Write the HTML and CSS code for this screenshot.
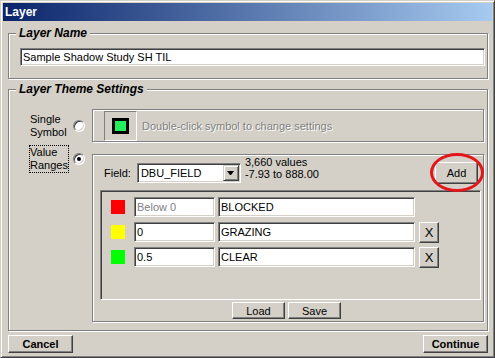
FILE: index.html
```html
<!DOCTYPE html>
<html>
<head>
  <title>Layer</title>
  <link rel="stylesheet" href="styles.css">
</head>
<body>
  <div class="window">
    <div class="titlebar">Layer</div>

    <div class="client">
      <fieldset class="group group-name">
        <legend>Layer Name</legend>
        <input type="text" class="field name-input" value="Sample Shadow Study SH TIL">
      </fieldset>

      <fieldset class="group group-theme">
        <legend>Layer Theme Settings</legend>

        <!-- single symbol option -->
        <div class="option option-single">
          <div class="option-label">Single<br>Symbol</div>
          <span class="radio"></span>
          <div class="panel single-panel">
            <button class="symbol-btn"><span class="symbol"></span></button>
            <span class="disabled-text">Double-click symbol to change settings</span>
          </div>
        </div>

        <!-- value ranges option -->
        <div class="option option-ranges">
          <div class="option-label focused">Value<br>Ranges</div>
          <span class="radio checked"></span>
          <div class="panel ranges-panel">
            <div class="ranges-top">
              <span class="field-label">Field:</span>
              <div class="combo">
                <span class="combo-text">DBU_FIELD</span>
                <span class="combo-btn">
                  <svg width="7" height="4" viewBox="0 0 7 4"><path d="M0 0h7L4 4H3z" fill="#000"/></svg>
                </span>
              </div>
              <div class="stats">3,660 values<br>-7.93 to 888.00</div>
              <div class="add-wrap">
                <button class="btn add-btn">Add</button>
                <span class="callout"></span>
              </div>
            </div>

            <div class="range-list">
              <div class="range-row">
                <span class="swatch red"></span>
                <input type="text" class="field low-input muted" value="Below 0">
                <input type="text" class="field label-input" value="BLOCKED">
              </div>
              <div class="range-row">
                <span class="swatch yellow"></span>
                <input type="text" class="field low-input" value="0">
                <input type="text" class="field label-input" value="GRAZING">
                <button class="btn remove-btn">X</button>
              </div>
              <div class="range-row">
                <span class="swatch green"></span>
                <input type="text" class="field low-input" value="0.5">
                <input type="text" class="field label-input" value="CLEAR">
                <button class="btn remove-btn">X</button>
              </div>
            </div>

            <div class="list-actions">
              <button class="btn action-btn">Load</button>
              <button class="btn action-btn">Save</button>
            </div>
          </div>
        </div>
      </fieldset>

      <div class="footer">
        <button class="btn footer-btn">Cancel</button>
        <button class="btn footer-btn">Continue</button>
      </div>
    </div>
  </div>
</body>
</html>
```

FILE: styles.css
```css
body {
  margin: 0;
  background-color: #d4d0c8;
  font-family: "Liberation Sans", Arial, sans-serif;
  font-size: 11px;
  color: #000;
}
.window {
  width: 495px;
  height: 358px;
  box-sizing: border-box;
  border: 1px solid;
  border-color: #d4d0c8 #404040 #404040 #d4d0c8;
  box-shadow: inset 1px 1px #fff, inset -1px -1px #808080;
  padding: 2px;
  display: flex;
  flex-direction: column;
}
.titlebar {
  height: 18px;
  line-height: 18px;
  padding-left: 2px;
  background: linear-gradient(to right, #0a246a, #a6caf0);
  color: #fff;
  font-weight: bold;
  font-size: 12px;
}
.client {
  display: flex;
  flex-direction: column;
  padding: 0 4px 0 5px;
}

/* group boxes */
.group {
  margin: 0;
  min-width: 0;
  border: 1px solid #808080;
  box-shadow: inset 1px 1px #fff, 1px 1px #fff;
}
.group legend {
  padding: 0 3px;
  background-color: #d4d0c8;
  font-weight: bold;
  font-style: italic;
  font-size: 12px;
  line-height: 13px;
}
.group-name {
  margin-top: 6px;
  padding: 8px 2px 12px 7px;
}
.group-theme {
  margin-top: 4px;
  padding: 13px 3px 8px 7px;
}

/* sunken text fields */
.field {
  box-sizing: border-box;
  margin: 0;
  height: 20px;
  padding: 0 2px;
  border: 1px solid;
  border-color: #808080 #fff #fff #808080;
  box-shadow: inset 1px 1px #404040, inset -1px -1px #d4d0c8;
  background-color: #fff;
  font-family: inherit;
  font-size: 11px;
  color: #000;
  outline: none;
}
.name-input {
  height: 18px;
  width: 465px;
  margin-left: 4px;
}
.muted {
  color: #808080;
}

/* raised buttons */
.btn {
  box-sizing: border-box;
  margin: 0;
  padding: 0;
  border: 1px solid;
  border-color: #fff #404040 #404040 #fff;
  box-shadow: inset -1px -1px #808080, inset 1px 1px #d4d0c8;
  background-color: #d4d0c8;
  font-family: inherit;
  font-size: 11px;
  color: #000;
}

/* option rows */
.option {
  display: flex;
  padding-left: 13px;
}
.option-single {
  align-items: center;
}
.option-ranges {
  align-items: flex-start;
  margin-top: 3px;
}
.option-label {
  width: 38px;
  border: 1px solid transparent;
  line-height: 13px;
}
.option-label.focused {
  border: 1px dotted #000;
}
.radio {
  position: relative;
  flex: none;
  box-sizing: border-box;
  width: 12px;
  height: 12px;
  margin-left: 4px;
  border-radius: 50%;
  border: 1px solid;
  border-color: #808080 #fff #fff #808080;
  box-shadow: inset 1px 1px #404040, inset -1px -1px #d4d0c8;
  background-color: #fff;
}
.option-ranges .radio {
  margin-top: 8px;
}
.radio.checked::after {
  content: "";
  position: absolute;
  left: 3px;
  top: 3px;
  width: 4px;
  height: 4px;
  border-radius: 50%;
  background-color: #000;
}

/* etched panels */
.panel {
  flex: 1;
  box-sizing: border-box;
  margin-left: 7px;
  border: 1px solid #808080;
  box-shadow: inset 1px 1px #fff, 1px 1px #fff;
}
.single-panel {
  height: 33px;
  display: flex;
  align-items: center;
}
.symbol-btn {
  box-sizing: border-box;
  width: 33px;
  height: 30px;
  margin: 0 0 0 11px;
  padding: 0;
  border: 1px solid;
  border-color: #808080 #fff #fff #808080;
  background-color: #d4d0c8;
  display: flex;
  align-items: center;
  justify-content: center;
}
.symbol {
  width: 11px;
  height: 10px;
  border: 3px solid #000;
  background-color: #22ee5e;
}
.disabled-text {
  margin-left: 5px;
  color: #808080;
  text-shadow: 1px 1px #fff;
}

.ranges-panel {
  height: 168px;
  margin-top: 9px;
  padding: 0 2px 2px 7px;
  display: flex;
  flex-direction: column;
}
.ranges-top {
  height: 35px;
  display: flex;
  align-items: center;
}
.field-label {
  margin-left: 4px;
}
.combo {
  box-sizing: border-box;
  width: 104px;
  height: 20px;
  margin-left: 6px;
  padding: 1px;
  border: 1px solid;
  border-color: #808080 #fff #fff #808080;
  box-shadow: inset 1px 1px #404040, inset -1px -1px #d4d0c8;
  background-color: #fff;
  display: flex;
  align-items: center;
}
.combo-text {
  padding-left: 2px;
}
.combo-btn {
  box-sizing: border-box;
  width: 16px;
  height: 16px;
  margin-left: auto;
  border: 1px solid;
  border-color: #d4d0c8 #404040 #404040 #d4d0c8;
  box-shadow: inset 1px 1px #fff, inset -1px -1px #808080;
  background-color: #d4d0c8;
  display: flex;
  align-items: center;
  justify-content: center;
}
.stats {
  align-self: flex-start;
  margin: 1px 0 0 4px;
  line-height: 12px;
}
.add-wrap {
  position: relative;
  margin-left: auto;
  margin-right: 3px;
}
.add-btn {
  display: block;
  width: 43px;
  height: 22px;
}
.callout {
  position: absolute;
  left: -5px;
  top: -9px;
  right: -6px;
  bottom: -8px;
  border: 3px solid #e2161b;
  border-radius: 50%;
}

/* list of ranges */
.range-list {
  height: 110px;
  box-sizing: border-box;
  padding: 6px 0 0 10px;
  border: 1px solid;
  border-color: #808080 #fff #fff #808080;
  box-shadow: inset 1px 1px #404040, inset -1px -1px #d4d0c8;
  display: flex;
  flex-direction: column;
  gap: 5px;
}
.range-row {
  display: flex;
  align-items: center;
  height: 20px;
}
.swatch {
  width: 14px;
  height: 14px;
  margin-right: 9px;
}
.red { background-color: #f00; }
.yellow { background-color: #ff0; }
.green { background-color: #0f0; }
.low-input {
  width: 81px;
}
.label-input {
  width: 197px;
  margin-left: 3px;
}
.remove-btn {
  width: 20px;
  height: 21px;
  margin-left: 4px;
  font-size: 13px;
}
.list-actions {
  display: flex;
  justify-content: center;
  gap: 3px;
  margin-top: 2px;
  padding-right: 8px;
}
.action-btn {
  width: 53px;
  height: 17px;
}

.footer {
  display: flex;
  justify-content: space-between;
  margin-top: 4px;
}
.footer-btn {
  width: 65px;
  height: 18px;
  font-weight: bold;
}
```
